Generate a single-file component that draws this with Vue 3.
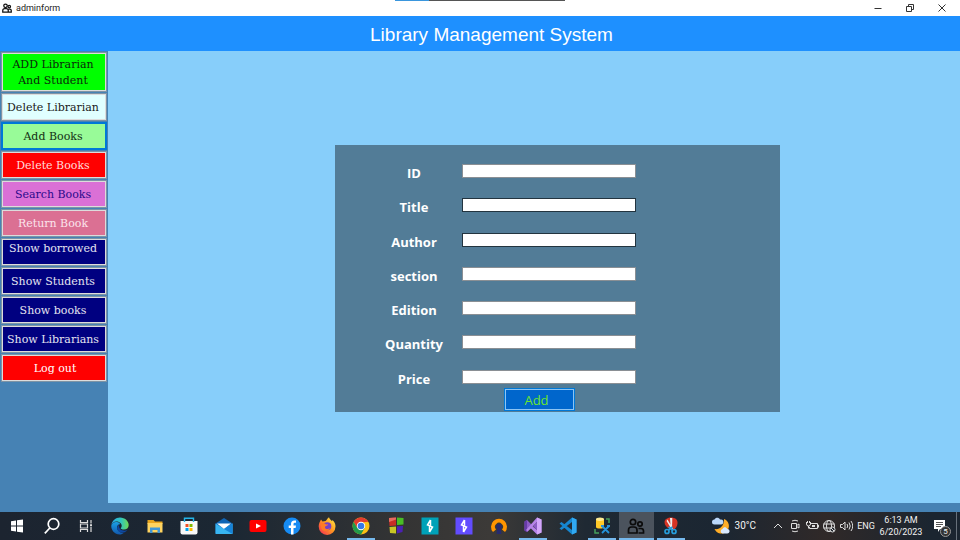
<script setup>
import { reactive } from 'vue'

const menu = [
  { text: 'ADD Librarian And Student', kind: 'lime tall' },
  { text: 'Delete Librarian', kind: 'cyan' },
  { text: 'Add Books', kind: 'green current' },
  { text: 'Delete Books', kind: 'red' },
  { text: 'Search Books', kind: 'orchid' },
  { text: 'Return Book', kind: 'rose' },
  { text: 'Show borrowed', kind: 'navy raised' },
  { text: 'Show Students', kind: 'navy' },
  { text: 'Show books', kind: 'navy' },
  { text: 'Show Librarians', kind: 'navy' },
  { text: 'Log out', kind: 'red logout' },
]

const fields = [
  { id: 'id', label: 'ID' },
  { id: 'title', label: 'Title', dark: true },
  { id: 'author', label: 'Author', dark: true },
  { id: 'section', label: 'section' },
  { id: 'edition', label: 'Edition' },
  { id: 'quantity', label: 'Quantity' },
  { id: 'price', label: 'Price' },
]

const book = reactive({
  id: '', title: '', author: '', section: '', edition: '', quantity: '', price: '',
})
</script>

<template>
  <div class="screen">
    <header class="titlebar">
      <svg class="app-icon" viewBox="0 0 20 20" fill="none" stroke="#111" stroke-width="2.500">
        <circle cx="7" cy="5.500" r="3.500" /><circle cx="14.500" cy="7" r="2.500" />
        <path d="M1.500 18v-3q0-4 4-4h3q4 0 4 4v3zM13 12h2.500q3 0 3 3v3h-6" />
      </svg>
      <span class="caption">adminform</span>
      <span class="snap"></span>
      <div class="window-buttons">
        <button aria-label="Minimize"><svg viewBox="0 0 10 10"><path d="M1.500 5.500h7" /></svg></button>
        <button aria-label="Restore"><svg viewBox="0 0 10 10"><path d="M1.500 3.500h5v5h-5zM3.500 3.500v-2h5v5h-2" /></svg></button>
        <button aria-label="Close"><svg viewBox="0 0 10 10"><path d="M1.500 1.500l7 7M8.500 1.500l-7 7" /></svg></button>
      </div>
    </header>

    <div class="banner"><h1>Library Management System</h1></div>

    <div class="workspace">
      <nav class="sidebar">
        <button v-for="item in menu" :key="item.text" type="button" :class="item.kind">{{ item.text }}</button>
      </nav>
      <main class="content">
        <form class="panel" @submit.prevent>
          <div class="fields">
            <div v-for="f in fields" :key="f.id" class="field">
              <label :for="f.id">{{ f.label }}</label>
              <input :id="f.id" v-model="book[f.id]" type="text" :class="{ dark: f.dark }" />
            </div>
          </div>
          <button class="add" type="submit">Add</button>
        </form>
      </main>
    </div>

    <footer class="taskbar">
      <div class="apps">
        <button aria-label="Start">
          <svg viewBox="0 0 20 20" fill="#fff"><path d="M4 5.300l5-.8v5H4zM10 4.300l6-.9v6.100h-6zM4 10.500h5v5l-5-.8zM10 10.500h6v6.100l-6-.9z" /></svg>
        </button>
        <button aria-label="Search">
          <svg viewBox="0 0 20 20" fill="none" stroke="#fff" stroke-width="1.700"><circle cx="11.500" cy="8" r="5.300" /><path d="M7.800 12l-5 5.300" /></svg>
        </button>
        <button aria-label="Task view">
          <svg viewBox="0 0 20 20" fill="none" stroke="#ddd" stroke-width="1.200"><path d="M4.500 4v2.500h7V4M4.500 16v-2.500h7V16M4.500 8h7v4h-7zM15 4v3.500M15 11v5" /><path d="M14 8.200h2v2h-2z" fill="#ddd" stroke="none" /></svg>
        </button>
        <button aria-label="Edge">
          <svg viewBox="0 0 20 20">
            <defs>
              <linearGradient id="edgeTop" x1="0" x2="1"><stop offset="0" stop-color="#26a8e8" /><stop offset=".55" stop-color="#30c5c0" /><stop offset="1" stop-color="#70dc50" /></linearGradient>
              <linearGradient id="edgeLow" x2="0" y2="1"><stop offset="0" stop-color="#1ba0e4" /><stop offset="1" stop-color="#1158ad" /></linearGradient>
            </defs>
            <path d="M1.300 9.500C2 4.500 5.600 1.500 10 1.500c5 0 8.700 3.700 8.700 7.500 0 3-2.200 4.600-4.700 4.600-2.100 0-3.300-.8-3.300-1.300 0-.6 1-1 1-2.600C11.700 7.300 9 5.500 6.500 5.500c-2.700 0-4.700 2-5.200 4z" fill="url(#edgeTop)" />
            <path d="M1.300 9.600C2 7.300 4.200 5.600 6.800 6c2 .3 3 1.300 3.500 2.200C8 8 7 10 7 11.500c0 3.500 3.500 5.500 6.600 5.500-1 .8-2.200 1.500-4 1.500-5 0-8.700-4.400-8.300-8.900z" fill="url(#edgeLow)" />
            <path d="M9 9c-1.400 1-2 2.300-1.800 3.700.5 3.300 4.500 4.800 7.500 3.600 1.100-.5 2-1.300 2.700-2.300-3 1.500-8.800.8-8.400-5z" fill="#0d47a0" />
          </svg>
        </button>
        <button aria-label="File Explorer">
          <svg viewBox="0 0 20 20"><path d="M2.500 4h6l1.500 1.500h7.500V8h-15z" fill="#e8a51e" /><path d="M2.500 7h15v9.500h-15z" fill="#ffd461" /><path d="M5 17v-5.500h10V17h-2.500v-3h-5v3z" fill="#4197d8" /></svg>
        </button>
        <button aria-label="Store">
          <svg viewBox="0 0 20 20"><path d="M1.500 5h17v11.500q0 2-2 2h-13q-2 0-2-2z" fill="#f8f8f8" /><path d="M5.500 6V2.300h9V6" fill="none" stroke="#25b5e8" stroke-width="1.400" /><path d="M6.500 8h3v3h-3z" fill="#f25022" /><path d="M10.500 8h3v3h-3z" fill="#7fba00" /><path d="M6.500 12h3v3h-3z" fill="#00a4ef" /><path d="M10.500 12h3v3h-3z" fill="#ffb900" /></svg>
        </button>
        <button aria-label="Mail">
          <svg viewBox="0 0 20 20"><path d="M1.500 7.500L10 2l8.500 5.500V17h-17z" fill="#0f65b5" /><path d="M1.500 7.500L10 13l8.500-5.500V18h-17z" fill="#38b5f1" /><path d="M3 7.500h14l-7 5.500z" fill="#fff" /><path d="M18.500 7.500V18L10 13z" fill="#1683d8" /></svg>
        </button>
        <button aria-label="YouTube">
          <svg viewBox="0 0 20 20"><rect x="1.500" y="4" width="17" height="12" rx="2" fill="#f00" /><path d="M8 7.500l5 2.500-5 2.500z" fill="#fff" /></svg>
        </button>
        <button aria-label="Facebook">
          <svg viewBox="0 0 20 20"><circle cx="10" cy="10" r="8.500" fill="#168bf3" /><path d="M9 18.500V12H6.700V9.500H9V8q0-3.500 3.500-3.500H14v2.200h-1.300q-1.200 0-1.200 1.200v1.600H14l-.4 2.500h-2.100v6.500z" fill="#fff" /></svg>
        </button>
        <button aria-label="Firefox">
          <svg viewBox="0 0 20 20">
            <defs><linearGradient id="fox" x1="1" x2="0" y2="1"><stop offset="0" stop-color="#fff44f" /><stop offset=".45" stop-color="#ff9a1f" /><stop offset="1" stop-color="#f5245a" /></linearGradient></defs>
            <path d="M2.500 6.500L4 3.500l1.500 2 3-.5C10 4.500 10 2.500 12 1.300c.5 2 2 2.500 3 4l.5-1.200c2 2 3 4 3 6.500a8.300 8.300 0 0 1-16.800 0c0-1.500.2-2.900.8-4.100z" fill="url(#fox)" />
            <circle cx="10.300" cy="10.300" r="4" fill="#7542c8" /><path d="M3.500 8c1.500-1.500 4-1 5.500.5l2-.3c0 1.600-2.600 1.300-3 2.700C7.500 13 11 14 13 12c-1 3-6 4-8 1.500C4 12 4 10 3.500 8z" fill="#ff7b25" />
          </svg>
        </button>
        <button class="running" aria-label="Chrome">
          <svg viewBox="0 0 20 20"><circle cx="10" cy="10" r="8.500" fill="#fbc116" /><path d="M2.640 5.750A8.500 8.500 0 0 1 17.360 5.750L10 6.500l-3.500 5.800z" fill="#e33b2e" /><path d="M2.640 5.750A8.500 8.500 0 0 0 10 18.500l3.700-6.400L10 10 6.300 12.100z" fill="#229a4b" /><circle cx="10" cy="10" r="4.200" fill="#fff" /><circle cx="10" cy="10" r="3.300" fill="#3579e8" /></svg>
        </button>
        <button aria-label="Code Blocks">
          <svg viewBox="0 0 20 20"><path d="M3 2l7-.5v8l-6.500.5z" fill="#c72d25" /><path d="M11 1.500l6.500.5v6.500l-6.500.6z" fill="#48bd25" /><path d="M3.500 11l6.500-.4v7L4 17z" fill="#c8c524" /><path d="M11 10.300l6-.3-.5 6-5.500 1.500z" fill="#4b20b4" /><path d="M3 2l7-.5v2L3 6z" fill="#e66b60" /></svg>
        </button>
        <button aria-label="Burp Suite">
          <svg viewBox="0 0 20 20"><path d="M1.500 1.500h17v17h-17z" fill="#00a2b8" /><path d="M10.500 4L7.500 9l5 2-3 5M10.500 4v5.500M9.500 10.500V16" fill="none" stroke="#fff" stroke-width="1.500" /></svg>
        </button>
        <button aria-label="Burp Suite Professional">
          <svg viewBox="0 0 20 20"><path d="M1.500 1.500h17v17h-17z" fill="#624cff" /><path d="M10.500 4L7.500 9l5 2-3 5M10.500 4v5.500M9.500 10.500V16" fill="none" stroke="#fff" stroke-width="1.500" /></svg>
        </button>
        <button aria-label="OpenVPN">
          <svg viewBox="0 0 20 20"><path d="M5.500 14.800A6 6 0 1 1 14.500 14.800" fill="none" stroke="#ff9500" stroke-width="4" /><circle cx="10" cy="10.500" r="2.700" fill="#252a6e" /><path d="M8.500 11h3l1 7h-5z" fill="#252a6e" /></svg>
        </button>
        <button class="running" aria-label="Visual Studio">
          <svg viewBox="0 0 20 20"><path d="M1.500 5.500L4 4l10.500 10.500V5.500L4 16l-2.500-1.500z" fill="#8c5bc6" /><path d="M1.500 5.500L4 4v12l-2.500-1.500z" fill="#673ba9" /><path d="M14 1.500l4.500 2v13l-4.500 2L6 10.500 8 9l6 5V6L4.500 15.500 3 14z" fill="#b683e8" /><path d="M14 1.500l4.500 2v13l-4.500 2z" fill="#d3a6fa" /></svg>
        </button>
        <button aria-label="Visual Studio Code">
          <svg viewBox="0 0 20 20"><path d="M14 1.500l4.500 2v13l-4.500 2L1.500 7.500 3.500 6 14 14V6L3.500 14l-2-1.500z" fill="#1687d0" /><path d="M14 1.500l4.500 2v13l-4.500 2z" fill="#31a9f2" /></svg>
        </button>
        <button class="running" aria-label="SQL Server Management Studio">
          <svg viewBox="0 0 20 20"><path d="M4 3v8c0 2 8 2 8 0V3z" fill="#ffc928" /><ellipse cx="8" cy="3.200" rx="4" ry="1.700" fill="#ffeb91" /><path d="M14 3h3v4M3 13v4h4" fill="none" stroke="#45a05c" stroke-width="1.500" /><path d="M10 10l7 7M17 10l-7 7M9 10h3M15 10h3" stroke="#2492db" stroke-width="1.800" /></svg>
        </button>
        <button class="running active" aria-label="adminform">
          <svg viewBox="0 0 20 20" fill="none" stroke="#0b0b0b" stroke-width="1.700"><circle cx="7" cy="6" r="2.700" /><circle cx="14" cy="8" r="2.200" /><path d="M2.500 17v-3q0-3 3-3H8q3 0 3 3v3zM12.500 12.500H15q2.500 0 2.500 2.500v2h-5" /></svg>
        </button>
        <button class="running" aria-label="Snipping Tool">
          <svg viewBox="0 0 20 20"><path d="M10 1.500c4 0 7 2 6.500 6-.3 3-2 5.500-4.500 6.500L9 13C5.500 11.500 3.500 9 3.500 6S7 1.500 10 1.500z" fill="#d63424" /><path d="M9 2h2.300L11 13H9.800zM5.500 5l1-1.500L12 13h-1.500z" fill="#eee" /><g fill="none" stroke="#269ddb" stroke-width="1.700"><circle cx="6" cy="15.500" r="2" /><circle cx="13" cy="15.500" r="2" /><path d="M7.500 14l4-3M11.500 14l-4-3" /></g></svg>
        </button>
      </div>

      <div class="tray">
        <button class="weather" aria-label="Weather 30°C">
          <svg viewBox="0 0 20 20"><path d="M13 3a7.500 7.500 0 1 1-9.500 10C9 14 13.500 9 13 3z" fill="#ffad27" /><path d="M3.500 8.500a2.500 2.500 0 0 1 0-5C4.500 1 8 1 9 3.500c3-.5 4 1.500 3 4q-.5 1-2 1z" fill="#bcd8fa" /><path d="M11.500 17.500a2.300 2.300 0 0 1 0-4.500c1-2.500 4-2 4.700 0 3-.3 3.300 4.500 0 4.500z" fill="#d9e9ff" /></svg>
          <span>30°C</span>
        </button>
        <button class="small" aria-label="Show hidden icons"><svg viewBox="0 0 14 14"><path d="M3 9l4-4 4 4" /></svg></button>
        <button class="small" aria-label="Meet Now"><svg viewBox="0 0 14 14"><path d="M3.500 4.500h5v5h-5zM8.500 6.500l2.500-1.500v4L8.500 7.500M4 2q3-1.500 6 0M4 12q3 1.500 6 0" /></svg></button>
        <button class="small" aria-label="Battery"><svg viewBox="0 0 14 14"><path d="M6 4.500h6.500v5h-8V8M12.500 6h1v2.500M1.500 3v2q0 2 2 2t2-2V3M2.500 2v2M4.500 2v2M3.500 7v2.500" /><path d="M7 6h3v2H7z" fill="#ddd" stroke="none" /></svg></button>
        <button class="small" aria-label="Network"><svg viewBox="0 0 14 14"><circle cx="7" cy="7" r="5.500" /><ellipse cx="7" cy="7" rx="2.500" ry="5.500" /><path d="M1.500 5h11M1.500 9h7" /><circle cx="10.500" cy="10.500" r="2.500" fill="#252a30" /><path d="M9 9l3 3" /></svg></button>
        <button class="small" aria-label="Volume"><svg viewBox="0 0 14 14"><path d="M1.500 5.500h2l2.500-2.500v8L3.500 8.500h-2zM8 5q1.500 2 0 4M10 3.500q2.500 3.500 0 7M12 2q3.500 5 0 10" /></svg></button>
        <span class="lang">ENG</span>
        <div class="clock"><span>6:13 AM</span><span>6/20/2023</span></div>
        <button class="notices" aria-label="Notifications">
          <svg viewBox="0 0 16 16"><path d="M2 2h11v9H8l-2 3v-3H2z" fill="#fff" /><path d="M4 4.500h7M4 6.500h7M4 8.500h5" stroke="#555" /></svg>
          <span class="badge">5</span>
        </button>
        <span class="desktop-edge"></span>
      </div>
    </footer>
  </div>
</template>

<style>
body { margin: 0; }
</style>

<style scoped>
* { box-sizing: border-box; }
button { padding: 0; border: 0; background: none; font: inherit; color: inherit; }
svg { display: block; flex: none; }

.screen {
  min-height: 100vh;
  display: flex;
  flex-direction: column;
  background: #4682b4;
  font-family: "Open Sans", "Noto Sans", sans-serif;
}

.titlebar {
  position: relative;
  height: 16px;
  display: flex;
  align-items: center;
  gap: 4px;
  padding: 0 2px;
  background: #fff;
  color: #222;
  font-family: Roboto, sans-serif;
  font-size: 9px;
  line-height: 16px;
}
.app-icon { width: 10px; height: 10px; }
.snap {
  position: absolute;
  top: 0;
  left: 50%;
  width: 170px;
  height: 1px;
  margin-left: -85px;
  background: linear-gradient(90deg, #3a96dd 20%, #555 20%);
}
.window-buttons { display: flex; margin-left: auto; }
.window-buttons button { width: 32px; height: 14px; display: grid; place-items: center; }
.window-buttons svg { width: 10px; height: 10px; fill: none; stroke: #333; }

.banner {
  height: 35px;
  padding-left: 23px;
  background: #1e90ff;
  text-align: center;
}
h1 {
  margin: 0;
  font: 400 19px/37px "Liberation Sans", sans-serif;
  color: #fff;
}

.workspace { flex: 1; display: flex; }
.sidebar {
  width: 108px;
  display: flex;
  flex-direction: column;
  gap: 1px;
  padding: 1px 1px 0;
}
.sidebar button {
  height: 28px;
  padding: 2px 2px 0 0;
  border: 2px solid #dcdcdc;
  outline: 1px solid #7d93a5;
  outline-offset: -1px;
  font: 11px/16px "DejaVu Serif", serif;
  white-space: nowrap;
}
.sidebar .tall { height: 40px; padding: 2px 6px 0 4px; white-space: normal; }
.sidebar .lime { background: #0f0; color: #0b2a0b; }
.sidebar .cyan { background: #e0ffff; color: #1a1a1a; }
.sidebar .green { background: #98fb98; color: #143014; }
.sidebar .red { background: #f00; color: #ffdcdc; }
.sidebar .orchid { background: #da70d6; color: #2a0a8c; }
.sidebar .rose { background: #db7093; color: #fce4ec; }
.sidebar .navy { background: #000080; color: #e4e4f0; }
.sidebar .current { border-color: #0078d7; outline: none; }
.sidebar .raised { padding: 0 2px 6px 0; }
.sidebar .logout { padding: 2px 0 0 2px; color: #fff; }

.content {
  flex: 1;
  display: grid;
  grid-template-columns: 227fr 445fr 180fr;
  align-items: center;
  margin-bottom: 9px;
  padding-top: 3px;
  background: #87cefa;
}
.panel {
  grid-column: 2;
  padding: 11px 0 1px;
  background: #527c97;
}
.fields { display: grid; grid-template-rows: repeat(7, 1fr); height: 240px; }
.field { display: grid; grid-template-columns: 127px 174px; align-items: start; }
.field label {
  padding: 7px 0 0 31px;
  font-size: 13px;
  line-height: 20px;
  font-weight: 700;
  text-align: center;
  color: #fff;
}
.field input {
  width: 100%;
  height: 14px;
  margin-top: 8px;
  padding: 0 2px;
  border: 1px solid #8a8f94;
  background: #fff;
  font-size: 9px;
}
.field .dark { border-color: #23343f; }
.add {
  display: block;
  width: 71px;
  height: 23px;
  margin: -8px 0 0 169px;
  padding-right: 6px;
  border: 1px solid #0078d7;
  box-shadow: inset 0 0 0 1px #8cc4f4;
  background: #0066cc;
  color: #6be52d;
  font-size: 13px;
  line-height: 20px;
}

.taskbar {
  height: 28px;
  display: flex;
  justify-content: space-between;
  background: linear-gradient(90deg, #1c2430 0%, #1b2733 24%, #343434 42%, #3c3a38 51%, #1f2933 61%, #1b2632 75%, #302928 86%, #1b2530 97%);
  color: #f2f2f2;
}
.apps { display: grid; grid-template-columns: repeat(20, 1fr); flex: 0 1 688px; }
.apps button { position: relative; display: grid; place-items: center; }
.apps svg { width: 20px; height: 20px; }
.running::after {
  content: "";
  position: absolute;
  inset: auto 3px 0;
  height: 2px;
  background: #76b9ed;
}
.active { background: #4b535d; }
.active::after { inset: auto 0 0; }

.tray {
  display: flex;
  align-items: center;
  font-family: Roboto, sans-serif;
  font-size: 10px;
  line-height: 12px;
}
.tray button { display: flex; align-items: center; justify-content: center; }
.weather { gap: 4px; margin-right: 13px; }
.weather svg { width: 20px; height: 20px; }
.small { width: 17px; }
.small svg { width: 14px; height: 14px; fill: none; stroke: #ddd; }
.lang { width: 24px; font-size: 9px; text-align: center; }
.clock { width: 46px; display: grid; font-size: 9px; text-align: center; }
.tray .notices { position: relative; width: 32px; height: 28px; }
.notices svg { width: 16px; height: 16px; }
.badge {
  position: absolute;
  right: 5px;
  bottom: 3px;
  width: 11px;
  height: 11px;
  border: 1px solid #999;
  border-radius: 50%;
  background: #333;
  font-size: 8px;
  line-height: 9px;
  text-align: center;
}
.desktop-edge { width: 4px; height: 28px; border-left: 1px solid #67707a; }
</style>
